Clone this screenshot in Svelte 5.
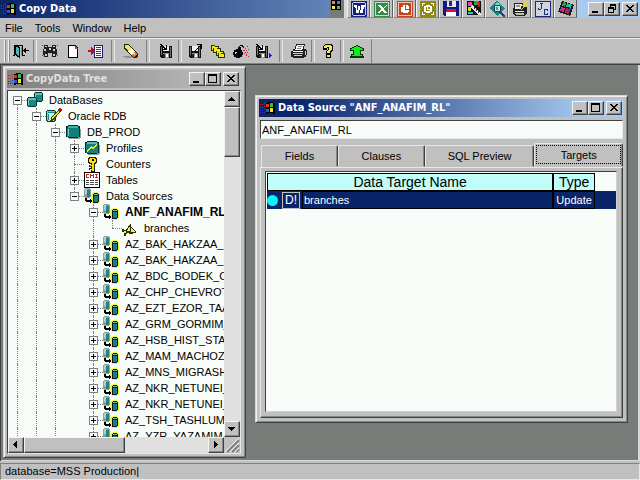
<script>
  const menus = ['File', 'Tools', 'Window', 'Help']

  const tools = [
    ['exit', 'Exit'], null,
    ['find', 'Find'], ['page', 'New'], ['insert', 'Insert'], 'wide',
    ['erase', 'Erase'], 'wide',
    ['savein', 'Load'], null,
    ['saveout', 'Export'], ['folders', 'Folders'], ['bomb', 'Delete'], ['savenext', 'Save next'], 'wide',
    ['print', 'Print'], null,
    ['help', 'Help'], null,
    ['up', 'Up']
  ]

  const office = ['word', 'excel', 'point', 'outlook', 'disk', 'paint', 'lens', 'fax', 'jc', 'cube']

  const sources = [
    'AZ_BAK_HAKZAA_P', 'AZ_BAK_HAKZAA_P', 'AZ_BDC_BODEK_C', 'AZ_CHP_CHEVROT',
    'AZ_EZT_EZOR_TAA', 'AZ_GRM_GORMIM_', 'AZ_HSB_HIST_STA', 'AZ_MAM_MACHOZ_',
    'AZ_MNS_MIGRASH', 'AZ_NKR_NETUNEI_', 'AZ_NKR_NETUNEI_', 'AZ_TSH_TASHLUM', 'AZ_YZR_YAZAMIM'
  ]

  // guides: one letter per column, l = line, e = empty, t = tee, c = corner, s = start
  const nodes = [
    { label: 'DataBases', icon: 'dbs', guides: 's', box: '-' },
    { label: 'Oracle RDB', icon: 'oracle', guides: 'lt', box: '-' },
    { label: 'DB_PROD', icon: 'db', guides: 'llt', box: '-' },
    { label: 'Profiles', icon: 'profile', guides: 'lllt', box: '+' },
    { label: 'Counters', icon: 'key', guides: 'lllt' },
    { label: 'Tables', icon: 'table', guides: 'lllt', box: '+' },
    { label: 'Data Sources', icon: 'source', guides: 'lllc', box: '-' },
    { label: 'ANF_ANAFIM_RL', icon: 'source', guides: 'lllet', box: '-', bold: true },
    { label: 'branches', icon: 'branch', guides: 'lllelc' },
    ...sources.map(label => ({ label, icon: 'source', guides: 'lllet', box: '+' }))
  ]

  const tabs = ['Fields', 'Clauses', 'SQL Preview', 'Targets']
  let active = $state('Targets')
  let sourceName = $state('ANF_ANAFIM_RL')
</script>

{#snippet floppy()}
  <path d="M2 3h12v12H3l-1-1z" fill="#101010"/>
  <path d="M3 4h1v8H3zM12 4h1v10h-1z" fill="#707070"/>
  <path d="M5 3h6v5H5z" fill="#f0f0f0"/>
  <path d="M5 10h6v5H5z" fill="#909090"/><path d="M8 11h2v3H8z" fill="#fff"/><path d="M5 11h2v4H5z" fill="#202020"/>
{/snippet}

{#snippet cylinder(x, y, w, h)}
  <path d="M{x + 1} {y}h{w - 2}v1h1v{h - 2}h-1v1h-{w - 2}v-1h-1v-{h - 2}h1z" fill="#003838"/>
  <path d="M{x + 1} {y + 1}h{w - 2}v{h - 2}h-{w - 2}z" fill="#188880"/>
  <path d="M{x + 1} {y + 1}h{w - 2}v1h-{w - 2}z" fill="#78c8c0"/>
  <path d="M{x + 1} {y + 2}h1v{h - 4}h-1z" fill="#88d0c8"/>
{/snippet}

{#snippet icon(name)}
  <svg class="icon" viewBox="0 0 16 16" width="16" height="16" shape-rendering="crispEdges" aria-hidden="true">
    {#if name === 'win'}
      <path d="M0 4h1v1H0zM2 4h1v1H2zM4 3h1v1H4zM0 7h1v1H0zM2 7h1v1H2zM4 6h1v1H4z" fill="#c02020"/>
      <path d="M0 10h1v1H0zM2 10h1v1H2zM4 9h1v1H4zM0 12h1v1H0zM2 12h1v1H2zM4 12h1v1H4z" fill="#2838c0"/>
      <path d="M6 3h2V2h5v1h2v11h-2v-1H8v1H6z" fill="#000"/>
      <path d="M6 4h3v3H6z" fill="#e03020"/><path d="M10 3h3v4h-3z" fill="#30c040"/>
      <path d="M6 9h3v3H6z" fill="#3050e0"/><path d="M10 8h3v4h-3z" fill="#f0e020"/>
    {:else if name === 'exit'}
      <path d="M1 2h9v10H9V3H2v9H1zM0 12h2v1H0zM9 12h3v1H9z" fill="#000"/>
      <path d="M2 2l5 2v11l-5-3z" fill="#000"/><path d="M3 4l3 1v8l-3-2z" fill="#48b8b0"/>
      <path d="M8 4h1v8H8z" fill="#808080"/>
      <path d="M10 7h6v1h-6zM11 6h1v3h-1zM12 5h1v5h-1z" fill="#000"/>
    {:else if name === 'find'}
      <path d="M2 2h4v2h4V2h4v4h1v6h-1v2h-4v-4H6v4H2v-2H1V6h1z" fill="#202020"/>
      <path d="M3 3h2v1H3zM11 3h2v1h-2zM2 6h2v2H2zM11 6h2v2h-2zM7 5h2v2H7zM3 11h2v2H3zM11 11h2v2h-2z" fill="#d0d0d0"/>
      <path d="M0 2h1v1H0zM15 2h1v1h-1zM0 12h1v1H0zM15 12h1v1h-1z" fill="#505050"/>
    {:else if name === 'page'}
      <path d="M3 2h8l2 3v10H3z" fill="#000"/><path d="M4 3h6v3h2v8H4z" fill="#fff"/>
      <path d="M10 3h1v1h1v1h1v1h-3z" fill="#b030b0"/>
    {:else if name === 'insert'}
      <path d="M6 2h9v13H6z" fill="#181878"/><path d="M7 3h7v11H7z" fill="#fff"/>
      <path d="M8 4h5v1H8zM8 6h5v1H8zM8 8h5v1H8zM8 10h5v1H8zM8 12h5v1H8z" fill="#3038b0"/>
      <path d="M0 7h3V4l4 4-4 4V9H0z" fill="#b01020"/>
    {:else if name === 'erase'}
      <path d="M0 13h9v2H2v-1H0z" fill="#909090"/>
      <path d="M1 1h4l10 9v3l-2 2h-3L1 5z" fill="#202020"/>
      <path d="M2 2h3l3 3-3 3-3-3z" fill="#f0e840"/><path d="M8 5l4 3-4 4-3-4z" fill="#fff"/>
      <path d="M12 8l2 3-2 3h-2l-2-2z" fill="#e07828"/>
      <path d="M4 3l4 4-1 1-4-4zM10 9l2 2-1 1-2-2z" fill="#f8d8b0"/>
    {:else if name === 'savein'}
      {@render floppy()}
      <path d="M2 1h2v1h1v1h1v1h1v1h1V2h1v5H4V6h2V5H5V4H4V3H3V2H2z" fill="#000"/>
    {:else if name === 'saveout'}
      {@render floppy()}
      <path d="M10 1h5v5h-1V3h-1v1h-1v1h-1v1h-1v1H9v1H8V7h1V6h1V5h1V4h1V3h1V2h-3z" fill="#000"/>
    {:else if name === 'savenext'}
      <g transform="translate(-2 0)">{@render floppy()}</g>
      <path d="M0 1h2v1h1v1h1v1h1v1h1V2h1v5H2V6h2V5H3V4H2V3H1V2H0z" fill="#000"/>
      <path d="M13 10h1v1h1v1h1v1h-1v1h-1v1h-1z" fill="#2020d0"/>
    {:else if name === 'folders'}
      <path d="M1 2h4v1h4v5H1zM3 4h4v1h4v5H3zM6 7h4v1h4v5H6zM8 9h4v1h3v5H8z" fill="#303000"/>
      <path d="M2 3h3v1h3v1H3v2H2zM4 5h3v1h3v2H6v1H4zM7 8h3v1h3v1H8v2H7zM9 10h2v1h3v3H9z" fill="#f0e820"/>
    {:else if name === 'bomb'}
      <path d="M3 6h4v1h2v2h1v3H9v2H7v1H3v-1H1v-2H0V9h1V7h2zM5 4h3v3H5zM6 3h1V2h3v1h1v2h-1V4H9V3H7v2H6z" fill="#000"/>
      <path d="M2 9h2v1H3v1H2z" fill="#d0d0d0"/>
      <path d="M10 3h1v1h-1zM12 5h1v1h-1zM14 3h1v1h-1zM10 7h2v1h-2zM13 7h1v1h-1zM15 6h1v1h-1zM11 10h1v1h-1zM13 11h1v2h-1zM15 13h1v1h-1zM12 9h1v1h-1zM14 9h1v1h-1z" fill="#d02030"/>
    {:else if name === 'print'}
      <path d="M5 1h9v2h-1v3h2v1h1v5h-1v2h-2v1H2v-1H0V8h2V6h2V3h1z" fill="#202020"/>
      <path d="M6 2h7l-2 5H4zM2 8h10v1H2z" fill="#fff"/><path d="M2 10h10v1H2zM3 12h8v1H3zM14 8h1v4h-1z" fill="#d0d0d0"/>
      <path d="M7 3h4v1H7zM6 5h4v1H6z" fill="#808080"/>
    {:else if name === 'help'}
      <path d="M5 1h7v1h1v6h-1v1h-1v2H6V8h1V7h1V5H7v2H3V3h1V2h1zM6 11h5v4H6z" fill="#000"/>
      <path d="M5 2h6v1h1v4h-1v1h-1v2H7V8h1V7h1V4H7v1H4V3h1zM7 12h3v2H7z" fill="#f0e860"/>
    {:else if name === 'up'}
      <path d="M7 2h2v1h2v1h2v1h2v3h-3v3h2v2h1v2H1v-2h1v-2h2V8H1V5h2V4h2V3h2z" fill="#003800"/>
      <path d="M7 3h2v1h2v1h2v1h1v1h-3v5h2v1H3v-1h2V7H2V6h1V5h2V4h2z" fill="#10e820"/>
    {:else if name === 'word'}
      <path d="M0 0h16v16H0z" fill="#182080"/><path d="M2 1h12v1H2zM2 14h12v1H2zM1 2h1v12H1zM14 2h1v12h-1z" fill="#c8d0f0"/>
      <path d="M3 4h3v5h1V5h2v4h1V4h4v2h-1v2h-1v4H9V9H8v3H5V7H4V6H3z" fill="#fff"/>
    {:else if name === 'excel'}
      <path d="M0 0h16v16H0z" fill="#388848"/><path d="M1 1h14v1H1zM1 14h14v1H1zM1 2h1v12H1zM14 2h1v12h-1z" fill="#c0e0c8"/>
      <path d="M4 4h3l2 3 3-3h1l-3 4 3 4h-3l-2-3-3 3H4l3-4z" fill="#fff"/>
    {:else if name === 'point'}
      <path d="M0 0h16v16H0z" fill="#c04820"/><path d="M1 1h14v1H1zM1 14h14v1H1zM1 2h1v12H1zM14 2h1v12h-1z" fill="#f0c8b0"/>
      <path d="M6 4h2v5h4v2h-1v1H6v-1H4V6h2zM9 4h2v1h1v3H9z" fill="#fff"/>
    {:else if name === 'outlook'}
      <path d="M0 0h16v16H0z" fill="#908810"/>
      <path d="M2 2h3v1H3v2H2zM11 2h3v3h-1V3h-2zM2 11h1v2h2v1H2zM13 11h1v3h-3v-1h2z" fill="#fff"/>
      <path d="M6 4h4v1h2v6h-2v1H6v-1H4V5h2z" fill="#fff"/><path d="M6 6h4v4H6z" fill="#908810"/><path d="M7 5h1v3h3v1H7z" fill="#fff"/>
    {:else if name === 'disk'}
      <path d="M0 0h16v15H1l-1-1z" fill="#101888"/><path d="M4 0h9v6H4z" fill="#e8e8e8"/><path d="M6 0h3v5H6z" fill="#202888"/>
      <path d="M3 8h10v7H3z" fill="#fff"/><path d="M3 8h10v3H3z" fill="#d01828"/>
    {:else if name === 'paint'}
      <path d="M1 0h14v14H1z" fill="#101010"/><path d="M2 1h4v4H2z" fill="#e050c0"/><path d="M8 0h5v4H8z" fill="#30a040"/>
      <path d="M2 6h3v4H2z" fill="#d8d820"/><path d="M2 11h5v2H2z" fill="#30c8d0"/><path d="M6 4l9 8v2h-3L5 7z" fill="#e8e8e8"/>
      <path d="M8 5h1v3H8zM10 7h1v3h-1zM12 9h1v3h-1z" fill="#303030"/><path d="M12 1h2v5h-2z" fill="#c02020"/>
    {:else if name === 'lens'}
      <path d="M8 0l8 7-8 8-8-8z" fill="#188888"/><path d="M8 1l5 4-3 2-5-3z" fill="#60e0d8"/>
      <path d="M6 4h5v1h1v5h-1v1H6v-1H5V5h1z" fill="#203850"/><path d="M6 5h5v5H6z" fill="#c8e8e0"/><path d="M7 6h2v3H7z" fill="#48a070"/>
      <path d="M11 10l5 4v2h-2l-4-5z" fill="#184088"/>
    {:else if name === 'fax'}
      <path d="M2 2h9v4h4v6l-2 3H3l-2-2V7h1z" fill="#202020"/><path d="M3 3h7l-1 5H3zM3 10h9v1H3z" fill="#e8e8e8"/>
      <path d="M4 4h4v2H4z" fill="#8890a8"/><path d="M3 12h9v2H4z" fill="#c0c0c0"/>
      <path d="M13 0h3l-3 4h3l-7 5 3-4h-2z" fill="#e8d820"/>
    {:else if name === 'jc'}
      <path d="M0 0h16v16H0z" fill="#1c2878"/><path d="M1 1h14v14H1z" fill="#d0d4e0"/>
      <path d="M5 2h3v1H7v5H6v1H3V7h1v1h2V3H5zM9 8h4v2h-1V9h-2v4h2v-1h1v2H9z" fill="#203070"/>
    {:else if name === 'cube'}
      <path d="M4 0l12 4-4 11L0 11z" fill="#181818"/><path d="M5 1l3 1-1 4-3-1z" fill="#20a048"/><path d="M9 2l5 2-1 3-5-1z" fill="#28c0a0"/>
      <path d="M3 6l4 1-1 4-4-1z" fill="#d028b0"/><path d="M8 7l4 1-1 5-4-1z" fill="#c82028"/><path d="M11 6l2 1-1 4-2-1z" fill="#3040d0"/>
    {:else if name === 'dbs'}
      {@render cylinder(7, 0, 9, 10)}
      {@render cylinder(0, 5, 10, 10)}
      <path d="M1 6h8v2H1zM8 1h7v2H8z" fill="#70b8b8"/>
    {:else if name === 'oracle'}
      {@render cylinder(0, 2, 10, 12)}
      <path d="M2 5h6v8H2z" fill="#c8f0e8"/><path d="M2 6h1v6H2z" fill="#188880"/>
      <path d="M13 1h2v2L8 12l-4 2 1-4z" fill="#403800"/><path d="M12 3l1 1-6 7H6v-1z" fill="#f0e030"/><path d="M13 0h2v1h1v2h-2l-2-1z" fill="#c01020"/>
    {:else if name === 'db'}
      <path d="M4 13h11v2H4zM15 5h1v9h-1z" fill="#909890"/>
      <path d="M3 1h10v1h2v11h-2v1H3v-1H1V2h2z" fill="#003030"/><path d="M2 4h12v9H2z" fill="#108078"/>
      <path d="M3 2h10v2H3z" fill="#40b0a8"/><path d="M3 5h1v7H3z" fill="#80d0c8"/>
    {:else if name === 'profile'}
      <path d="M4 13h11v2H4zM15 5h1v9h-1z" fill="#909890"/>
      <path d="M3 1h10v1h2v11h-2v1H3v-1H1V2h2z" fill="#003030"/><path d="M2 3h12v10H2z" fill="#108078"/>
      <path d="M3 2h10v2H3z" fill="#60b8b0"/><path d="M3 10l4-4 2 2 4-5v2l-4 5-2-2-3 4H3z" fill="#f0e830"/>
    {:else if name === 'key'}
      <path d="M5 1h7v1h1v5h-1v1h-1v8H7v-2H5v-2h2v-1H5V9h2V8H5V7H4V2h1z" fill="#202000"/>
      <path d="M6 2h5v1h1v3h-1v1h-1v8H8v-1H6v-1h2v-3H6V9h2V7H6V6H5V3h1z" fill="#f0e020"/><path d="M8 3h2v2H8z" fill="#000"/>
    {:else if name === 'table'}
      <path d="M0 0h16v16H0z" fill="#000"/><path d="M1 1h14v14H1z" fill="#fff"/>
      <path d="M2 2h3v1H3v2h2v1H2zM6 2h1v1h2V2h1v4H9V4H7v2H6zM11 2h3v1h-1v2h1v1h-3V5h1V3h-1z" fill="#d02020"/>
      <path d="M2 8h3v1H2zM6 8h4v1H6zM11 8h3v1h-3zM2 10h3v1H2zM6 10h4v1H6zM11 10h3v1h-3zM2 12h3v1H2zM6 12h4v1H6zM11 12h3v1h-3z" fill="#505050"/>
    {:else if name === 'source'}
      <path d="M1 0h5v1h1v8H6v1H1V9H0V1h1z" fill="#88a0a0"/><path d="M3 2h3v7H3z" fill="#288080"/><path d="M1 1h2v5H1z" fill="#b0d0d0"/>
      <path d="M9 4h5v1h1v1h1v8h-1v1h-1v1H9v-1H8v-1H7V6h1V5h1z" fill="#f4f440"/>
      <path d="M9 6h1V5h4v1h1v8h-1v1H9z" fill="#101818"/><path d="M10 8h4v6h-4z" fill="#188078"/><path d="M10 6h4v1h-4z" fill="#78c0b8"/>
      <path d="M1 10h2v2h3v-1h1v1h1v2H7v1H6v-1H2v-1H1z" fill="#000"/>
    {:else if name === 'branch'}
      <path d="M0 9h2v1h2l5-7v3l5 6v1h-3v1H7v-1H5v1H4v2H2v-4H0z" fill="#303000"/>
      <path d="M5 11l3-5v5zM9 8l4 4H9z" fill="#f0e888"/><path d="M2 11h2v2H2z" fill="#f0f040"/>
    {/if}
  </svg>
{/snippet}

{#snippet controls(restore)}
  <div class="controls">
    <button class="ctl" aria-label="Minimize"><svg viewBox="0 0 10 10" width="10" height="10" shape-rendering="crispEdges"><path d="M1 7h6v2H1z"/></svg></button>
    <button class="ctl" aria-label="Maximize">
      <svg viewBox="0 0 10 10" width="10" height="10" shape-rendering="crispEdges">
        {#if restore}
          <path d="M3 0h6v6H7V5h1V2H4v1H3zM1 3h6v6H1zM2 5v3h4V5z" fill-rule="evenodd"/>
        {:else}
          <path d="M0 0h9v9H0zM1 2v6h7V2z" fill-rule="evenodd"/>
        {/if}
      </svg>
    </button>
    <button class="ctl close" aria-label="Close"><svg viewBox="0 0 10 10" width="10" height="10" shape-rendering="crispEdges"><path d="M1 1h2v1h1v1h2V2h1V1h2v1H8v1H7v1H6v1h1v1h1v1h1v1H7V7H6V6H4v1H3v1H1V7h1V6h1V5h1V4H3V3H2V2H1z"/></svg></button>
  </div>
{/snippet}

{#snippet arrow(dir)}
  <button class="arrow" aria-label="Scroll {dir}">
    <svg viewBox="0 0 8 8" width="8" height="8" shape-rendering="crispEdges">
      {#if dir === 'up'}<path d="M3 2h1v1h1v1h1v1h1v1H0V5h1V4h1V3h1z"/>
      {:else if dir === 'down'}<path d="M0 2h7v1H6v1H5v1H4v1H3V5H2V4H1V3H0z"/>
      {:else if dir === 'left'}<path d="M5 0v7H4V6H3V5H2V4H1V3h1V2h1V1h1V0z"/>
      {:else}<path d="M2 0h1v1h1v1h1v1h1v1H5v1H4v1H3v1H2z"/>{/if}
    </svg>
  </button>
{/snippet}

<div class="app">
  <header class="titlebar main-title">
    {@render icon('win')}
    <h1>Copy Data</h1>
    <div class="dock">
      <div class="dock-head">
        <svg viewBox="0 0 10 10" width="10" height="10" shape-rendering="crispEdges" aria-hidden="true">
          <path d="M0 0h10v10H0z" fill="#000"/>
          <path d="M1 1h3v3H1z" fill="#e08068"/><path d="M6 1h3v3H6z" fill="#4878e0"/>
          <path d="M1 6h3v3H1z" fill="#f0e070"/><path d="M6 6h3v3H6z" fill="#60b060"/>
        </svg>
      </div>
      {#each office as name}
        <button class="dock-btn" aria-label={name}>{@render icon(name)}</button>
      {/each}
    </div>
    {@render controls(true)}
  </header>

  <nav class="menubar">
    {#each menus as menu}<button>{menu}</button>{/each}
  </nav>

  <div class="toolbar">
    <span class="grip"></span>
    {#each tools as tool}
      {#if Array.isArray(tool)}
        <button class="tool" aria-label={tool[1]}>{@render icon(tool[0])}</button>
      {:else}
        <span class="sep" class:wide={tool === 'wide'}></span>
      {/if}
    {/each}
    <span class="end"></span>
  </div>

  <main class="desktop">
    <section class="window tree-window">
      <div class="titlebar inactive">
        {@render icon('win')}
        <h2>CopyData Tree</h2>
        {@render controls(false)}
      </div>
      <div class="tree-box">
        <div class="tree">
          {#each nodes as node}
            <div class="node">
              {#each node.guides as g, i}
                <span class="guide {g}">
                  {#if node.box && i === node.guides.length - 1}
                    <button class="box" class:plus={node.box === '+'} aria-label="Toggle {node.label}"></button>
                  {/if}
                </span>
              {/each}
              {@render icon(node.icon)}
              <span class="label" class:bold={node.bold}>{node.label}</span>
            </div>
          {/each}
        </div>
        <div class="scroll vertical">
          {@render arrow('up')}
          <div class="thumb"></div>
          {@render arrow('down')}
        </div>
        <div class="scroll horizontal">
          {@render arrow('left')}
          <div class="thumb"></div>
          {@render arrow('right')}
        </div>
        <svg class="sizer" viewBox="0 0 16 16" width="16" height="16" aria-hidden="true">
          <path d="M3 15L15 3M8 15l7-7M12 15l3-3" stroke="#808080" stroke-width="2"/>
          <path d="M1 15L15 1M6 15l9-9M11 15l4-4" stroke="#f4f4f4"/>
        </svg>
      </div>
    </section>

    <section class="window source-window">
      <div class="titlebar">
        {@render icon('win')}
        <h2>Data Source "ANF_ANAFIM_RL"</h2>
        {@render controls(false)}
      </div>
      <input class="name" aria-label="Data source name" bind:value={sourceName} />
      <div class="tabs" role="tablist">
        {#each tabs as tab}
          <button role="tab" aria-selected={active === tab} class:active={active === tab} onclick={() => (active = tab)}><span>{tab}</span></button>
        {/each}
      </div>
      <div class="panel">
        <div class="sheet">
          <table>
            <thead>
              <tr><th class="target">Data Target Name</th><th class="type">Type</th><td></td></tr>
            </thead>
            <tbody>
              <tr>
                <td class="target">
                  <div class="cell">
                    <span class="dot"></span>
                    <button class="kind">D!</button>
                    <span class="value">branches</span>
                  </div>
                </td>
                <td class="type">Update</td>
                <td></td>
              </tr>
            </tbody>
          </table>
        </div>
      </div>
    </section>
  </main>

  <footer class="status">database=MSS Production|</footer>
</div>

<style>
  :global(body) { margin: 0; background: #c0c0c0; }
  .app {
    display: flex;
    flex-direction: column;
    height: 100vh;
    overflow: hidden;
    font: 11px/16px "Liberation Sans", Arial, sans-serif;
    color: #000;
    background: #c0c0c0;
  }
  .app * { box-sizing: border-box; }
  button { font: inherit; color: inherit; padding: 0; border: 0; background: none; }
  .icon { flex: none; display: block; }

  /* title bars */
  .titlebar {
    display: flex;
    align-items: center;
    flex: none;
    height: 18px;
    padding: 0 2px 0 1px;
    color: #fff;
    background: linear-gradient(to right, #0a246a, #0a246a 10%, #a6caf0 90%);
  }
  .titlebar.inactive { color: #e0e0e0; background: linear-gradient(to right, #808080, #c0c0c0); }
  .titlebar h1, .titlebar h2 {
    flex: 1;
    margin: 0 0 0 2px;
    font: bold 11px/18px "DejaVu Sans Condensed", "DejaVu Sans", sans-serif;
    white-space: nowrap;
  }
  .controls { display: flex; }
  .ctl, .arrow, .thumb {
    background: #c0c0c0;
    border: 1px solid;
    border-color: #f4f4f4 #404040 #404040 #f4f4f4;
    box-shadow: inset -1px -1px #888;
  }
  .ctl { width: 16px; height: 14px; display: flex; align-items: center; justify-content: center; }
  .close { margin-left: 2px; }
  .main-title { background: linear-gradient(to right, #0a246a, #a6caf0 90%); }

  .dock { display: flex; height: 18px; margin-right: 11px; background: #c0c0c0; }
  .dock-head { width: 17px; padding-left: 1px; background: #787c78; border-right: 3px solid #d8d8d8; }
  .dock-head svg { display: block; }
  .dock-btn {
    width: 23px;
    padding-left: 3px;
    border-right: 1px solid #606060;
    border-left: 1px solid #f0f0f0;
    border-bottom: 1px solid #808080;
  }

  .menubar { display: flex; flex: none; height: 20px; gap: 12px; padding-left: 5px; border-bottom: 1px solid #808080; }
  .toolbar { display: flex; flex: none; height: 26px; align-items: center; border-top: 1px solid #f0f0f0; border-bottom: 1px solid #808080; }
  .tool { display: flex; justify-content: center; width: 23px; }
  .grip { width: 5px; height: 22px; margin-left: 4px; border: solid #f0f0f0; border-width: 0 1px; box-shadow: 1px 0 #888, inset 1px 0 #888; }
  .sep { display: flex; justify-content: center; width: 6px; height: 22px; }
  .sep.wide { width: 12px; }
  .sep::before { content: ""; width: 2px; border-left: 1px solid #808080; border-right: 1px solid #e8e8e8; }
  .end { width: 4px; height: 24px; border-right: 1px solid #808080; }

  /* free area that holds the child windows */
  .desktop {
    position: relative;
    flex: 1;
    min-height: 0;
    overflow: hidden;
    background: #787c78;
    border: solid #404040;
    border-width: 1px 0 0 1px;
    box-shadow: inset -2px -1px #d8d8d8;
  }
  .window {
    position: absolute;
    display: flex;
    flex-direction: column;
    padding: 3px;
    background: #c0c0c0;
    border: 1px solid;
    border-color: #d8d8d8 #404040 #404040 #d8d8d8;
    box-shadow: inset 1px 1px #f0f0f0, inset -1px -1px #888;
  }
  .tree-window { left: 2px; top: 1px; bottom: 3px; width: 243px; padding-right: 4px; }
  .source-window { left: 254px; top: 30px; bottom: 38px; right: 12px; }

  .tree-box {
    display: grid;
    flex: 1;
    min-height: 0;
    grid-template: minmax(0, 1fr) 16px / minmax(0, 1fr) 16px;
    margin-top: 2px;
    border: 1px solid;
    border-color: #404040 #e8e8e8 #e8e8e8 #404040;
  }
  .tree { overflow: hidden; padding-top: 1px; background: #f8fcf8; }
  .node { display: flex; align-items: center; height: 16px; white-space: nowrap; }
  .label { margin-left: 6px; }
  .bold { font-size: 12px; font-weight: bold; }
  .guide { position: relative; flex: none; width: 19px; height: 16px; }
  .guide::before { content: ""; position: absolute; left: 9px; top: 0; bottom: 0; border-left: 1px dotted #808080; }
  .guide::after { content: ""; position: absolute; left: 9px; right: 0; top: 8px; border-top: 1px dotted #808080; }
  .l::after, .e::after, .e::before { display: none; }
  .c::before { bottom: 8px; }
  .s::before { top: 8px; }
  .box {
    position: absolute;
    z-index: 1;
    left: 5px;
    top: 4px;
    width: 9px;
    height: 9px;
    border: 1px solid #808080;
    background: linear-gradient(#000, #000) center / 5px 1px no-repeat #f8fcf8;
  }
  .box.plus {
    background: linear-gradient(#000, #000) center / 5px 1px no-repeat, linear-gradient(#000, #000) center / 1px 5px no-repeat, #f8fcf8;
  }

  .scroll { display: flex; background: #e0e0e0; }
  .vertical { flex-direction: column; }
  .arrow { flex: none; display: flex; align-items: center; justify-content: center; width: 16px; height: 16px; }
  .vertical .thumb { height: 50px; margin-bottom: auto; }
  .horizontal .thumb { width: 101px; margin-right: auto; }
  .sizer { display: block; }

  /* data source window */
  .name {
    height: 19px;
    margin: 3px 1px 0 1px;
    padding: 0 1px;
    font: inherit;
    font-size: 11px;
    background: #f8fcf8;
    border: 1px solid;
    border-color: #404040 #e8e8e8 #e8e8e8 #404040;
    border-radius: 0;
    outline: 0;
  }
  .tabs { display: flex; flex: none; align-items: flex-end; height: 24px; margin: 4px 1px 0 2px; }
  .tabs button {
    flex: 76 1 0;
    height: 22px;
    padding: 1px;
    border: 1px solid;
    border-color: #e8e8e8 #404040 transparent #e8e8e8;
    border-radius: 2px 2px 0 0;
    box-shadow: inset -1px 0 #888;
  }
  .tabs button:nth-child(2) { flex-grow: 86; }
  .tabs button:nth-child(3) { flex-grow: 110; }
  .tabs button:nth-child(4) { flex-grow: 88; }
  .tabs .active { height: 24px; padding: 1px 1px 2px; }
  .tabs span { display: flex; align-items: center; justify-content: center; height: 100%; }
  .active span { border: 1px dotted #000; }
  .panel {
    display: flex;
    flex: 1;
    min-height: 0;
    margin: 0 1px 1px 1px;
    padding: 3px 5px 5px 4px;
    border: 1px solid;
    border-color: #e8e8e8 #404040 #404040 #e8e8e8;
    box-shadow: inset -1px -1px #888;
  }
  .sheet {
    flex: 1;
    padding: 1px 0 0 1px;
    background: #f8fcf8;
    border: 1px solid;
    border-color: #404040 #d0d0d0 #d0d0d0 #404040;
  }
  table { width: 100%; border-collapse: separate; border-spacing: 0; table-layout: fixed; }
  th, td { height: 18px; padding: 0; line-height: 16px; }
  th { font-size: 14px; font-weight: normal; background: #c0fcf8; border: 1px solid #000; }
  th.target { width: 82%; }
  th.type { width: 12%; }
  tbody td { color: #fff; background: #0a246a; }
  td.type { text-align: center; border: 1px solid #000; }
  .cell { display: flex; align-items: center; height: 18px; }
  .dot { width: 11px; height: 11px; border-radius: 50%; background: #00f8f8; }
  .kind { width: 18px; height: 17px; margin: 0 2px 0 4px; border: 1px solid #c0c0c0; font-size: 12px; line-height: 14px; }
  .value { flex: 1; height: 18px; padding-left: 1px; border: 1px solid #000; }

  .status {
    flex: none;
    height: 17px;
    margin-top: 2px;
    padding-left: 4px;
    line-height: 15px;
    border: 1px solid;
    border-color: #808080 #e8e8e8 #e8e8e8 #808080;
  }
</style>
